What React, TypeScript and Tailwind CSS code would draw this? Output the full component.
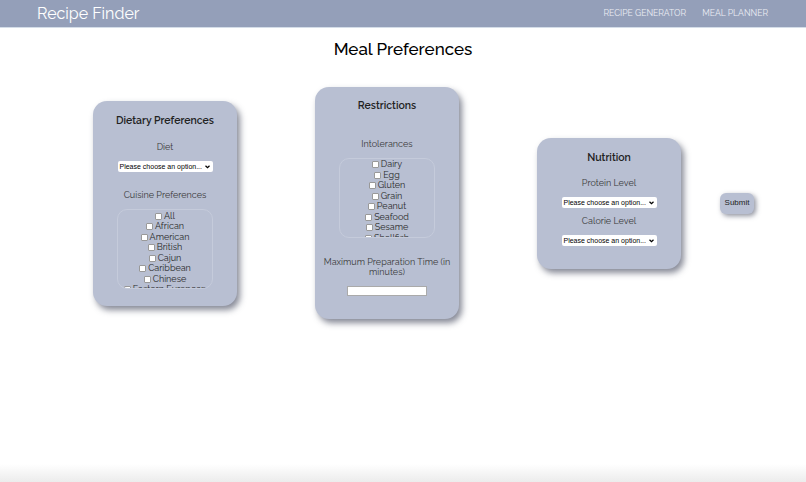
import React from 'react';

const font = { fontFamily: 'Raleway, Lato, "Noto Sans", sans-serif' };

const cuisines = ['All', 'African', 'American', 'British', 'Cajun', 'Caribbean', 'Chinese', 'Eastern European'];
const intolerances = ['Dairy', 'Egg', 'Gluten', 'Grain', 'Peanut', 'Seafood', 'Sesame', 'Shellfish'];

function Select() {
  return (
    <div className="flex justify-center">
      <div className="flex items-center justify-between w-[95px] h-[11px] bg-white rounded-[2px] pl-[2px] pr-[3px] text-[7px] leading-none text-black whitespace-nowrap overflow-hidden font-['Liberation_Sans',sans-serif]">
        <span>Please choose an option...</span>
        <svg width="5" height="4" viewBox="0 0 10 7" className="shrink-0">
          <path d="M1 1l4 4 4-4" fill="none" stroke="black" strokeWidth="2.4" />
        </svg>
      </div>
    </div>
  );
}

function CheckList({ items }: { items: string[] }) {
  return (
    <div className="mx-auto h-[80px] w-[96px] overflow-hidden rounded-[10px] border border-[#c5cbdb] pt-[1px]">
      {items.map((it) => (
        <div key={it} className="flex items-center justify-center gap-[2px] h-[10.5px] text-[9px] leading-none text-[#2a2a2a] whitespace-nowrap">
          <span className="inline-block w-[7px] h-[7px] bg-white border border-[#999] rounded-[1px] shrink-0" />
          <span>{it}</span>
        </div>
      ))}
    </div>
  );
}

function Card({ children, className }: { children: React.ReactNode; className: string }) {
  return (
    <div className={`w-[144px] rounded-[14px] bg-[#b8bfd2] shadow-[3px_4px_6px_rgba(70,75,95,0.65)] text-center ${className}`}>
      {children}
    </div>
  );
}

export default function App() {
  return (
    <div className="h-[482px] flex flex-col bg-white overflow-hidden" style={font}>
      <header className="h-[28px] shrink-0 bg-[#949fb9] border-b border-[#d4dde8] flex items-center justify-between pl-[37px] pr-[38px]">
        <div className="text-white text-[16px] leading-none">Recipe Finder</div>
        <nav className="flex gap-[16px] text-[8.6px] text-[#eceef4]">
          <span>RECIPE GENERATOR</span>
          <span>MEAL PLANNER</span>
        </nav>
      </header>

      <h1 className="text-center text-[17px] leading-none text-black mt-[13px] font-medium">Meal Preferences</h1>

      <div className="flex items-center pl-[93px] mt-[22px] h-[246px]">
        <Card className="h-[205px] pt-[14px]">
          <div className="text-[10.5px] font-semibold text-[#222] leading-none">Dietary Preferences</div>
          <div className="text-[9px] text-[#3a3a3a] leading-none mt-[18px]">Diet</div>
          <div className="mt-[9px]"><Select /></div>
          <div className="text-[9px] text-[#3a3a3a] leading-none mt-[19px]">Cuisine Preferences</div>
          <div className="mt-[9px]"><CheckList items={cuisines} /></div>
        </Card>

        <Card className="h-[232px] pt-[13px] ml-[78px]">
          <div className="text-[10.5px] font-semibold text-[#222] leading-none">Restrictions</div>
          <div className="text-[9px] text-[#3a3a3a] leading-none mt-[29px]">Intolerances</div>
          <div className="mt-[9px]"><CheckList items={intolerances} /></div>
          <div className="text-[9px] text-[#3a3a3a] leading-[10px] mt-[19px] px-[5px]">Maximum Preparation Time (in minutes)</div>
          <div className="mt-[9px] flex justify-center">
            <div className="w-[80px] h-[10px] bg-white border border-[#aaa]" />
          </div>
        </Card>

        <Card className="h-[131px] pt-[14px] ml-[78px]">
          <div className="text-[10.5px] font-semibold text-[#222] leading-none">Nutrition</div>
          <div className="text-[9px] text-[#3a3a3a] leading-none mt-[17px]">Protein Level</div>
          <div className="mt-[9px]"><Select /></div>
          <div className="text-[9px] text-[#3a3a3a] leading-none mt-[9px]">Calorie Level</div>
          <div className="mt-[9px]"><Select /></div>
        </Card>

        <button className="ml-[39px] w-[34px] h-[21px] rounded-[6px] bg-[#b8bfd2] shadow-[2px_2px_5px_rgba(70,75,95,0.6)] text-[8px] text-[#222] font-['Liberation_Sans',sans-serif]">
          Submit
        </button>
      </div>

      <div className="flex-1" />
      <div className="h-[18px] shrink-0 bg-gradient-to-b from-white to-[#ececec]" />
    </div>
  );
}
